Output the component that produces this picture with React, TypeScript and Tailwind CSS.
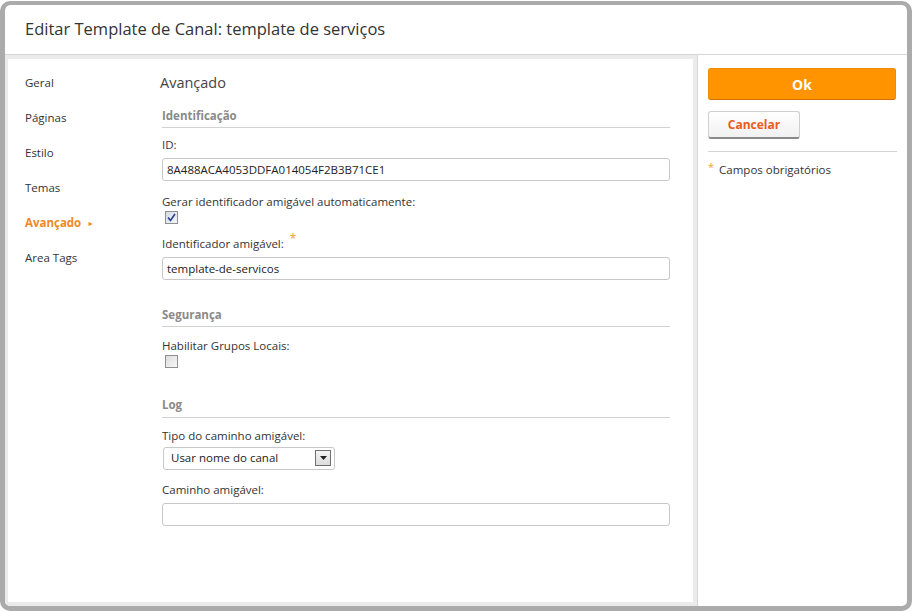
import { ReactNode } from "react";

const navItems = ["Geral", "Páginas", "Estilo", "Temas", "Avançado", "Area Tags"];

function SectionTitle({ children }: { children: ReactNode }) {
  return (
    <div className="border-b border-[#d2d2d2] pb-[3px] text-[11.5px] font-bold text-[#8a8a8a]">
      {children}
    </div>
  );
}

function Field({ label, children, required }: { label: string; children: ReactNode; required?: boolean }) {
  return (
    <div className="flex flex-col">
      <div className="flex h-[18px] items-center text-[11.5px] leading-[18px] text-[#333]">
        {label}
        {required && (
          <span className="relative -top-[5px] ml-[6px] text-[12px] leading-none text-[#f59c1a]">*</span>
        )}
      </div>
      {children}
    </div>
  );
}

function TextBox({ value }: { value?: string }) {
  return (
    <div className="mt-[4px] flex h-[23px] w-[508px] items-center rounded-[3px] border border-[#c8c8c8] bg-white px-[4px] text-[11.5px] text-[#222]">
      {value}
    </div>
  );
}

function CheckBox({ checked }: { checked?: boolean }) {
  return (
    <div
      className={
        "ml-[3px] flex h-[13px] w-[13px] items-center justify-center border border-[#8e8f8f] bg-gradient-to-br " +
        (checked ? "from-[#d4dbe8] to-[#f4f6fa]" : "from-[#dcdcdc] to-[#f8f8f8]")
      }
    >
      {checked && (
        <svg width="9" height="9" viewBox="0 0 9 9">
          <path d="M1 4.5 L3.5 7.5 L8 1" fill="none" stroke="#2a3f8f" strokeWidth="1.6" />
        </svg>
      )}
    </div>
  );
}

export default function App() {
  return (
    <div className="h-[612px] w-[912px] bg-white pt-px" style={{ fontFamily: '"Open Sans", "Noto Sans", sans-serif' }}>
      <div className="flex h-[610px] flex-col overflow-hidden rounded-[10px] border-x-[5px] border-b-[5px] border-t-[4px] border-[#ababab] bg-white">
        <div className="flex h-[50px] shrink-0 items-center border-b border-[#d6d6d6] pl-[20px] text-[16.5px] text-[#333]">
          Editar Template de Canal: template de serviços
        </div>
        <div className="flex flex-1">
          <div className="flex w-[692px] border-[4px] border-[#ebebeb] border-l-[3px]">
            <nav className="flex w-[140px] flex-col pl-[17px] pt-[6px] text-[11.5px] text-[#333]">
              {navItems.map((item) => (
                <div key={item} className="flex h-[35px] items-center">
                  {item === "Avançado" ? (
                    <span className="font-bold text-[#f08a1c]">
                      {item}
                      <span className="ml-[6px] text-[7px] align-middle">►</span>
                    </span>
                  ) : (
                    item
                  )}
                </div>
              ))}
            </nav>
            <div className="flex flex-col pl-[14px] pt-[13px]">
              <div className="-ml-[2px] text-[14.5px] text-[#444]">Avançado</div>
              <div className="mt-[13px]">
                <SectionTitle>Identificação</SectionTitle>
              </div>
              <div className="mt-[8px] flex flex-col">
                <Field label="ID:">
                  <TextBox value="8A488ACA4053DDFA014054F2B3B71CE1" />
                </Field>
                <div className="mt-[12px]">
                  <Field label="Gerar identificador amigável automaticamente:">
                    <CheckBox checked />
                  </Field>
                </div>
                <div className="mt-[11px]">
                  <Field label="Identificador amigável:" required>
                    <TextBox value="template-de-servicos" />
                  </Field>
                </div>
              </div>
              <div className="mt-[26px]">
                <SectionTitle>Segurança</SectionTitle>
              </div>
              <div className="mt-[10px]">
                <Field label="Habilitar Grupos Locais:">
                  <CheckBox />
                </Field>
              </div>
              <div className="mt-[28px]">
                <SectionTitle>Log</SectionTitle>
              </div>
              <div className="mt-[9px] flex flex-col gap-[11px]">
                <Field label="Tipo do caminho amigável:">
                  <div className="mt-[2px] ml-[1px] flex h-[23px] w-[172px] items-center justify-between rounded-[3px] border border-[#c8c8c8] bg-white pl-[7px] pr-[3px] text-[11.5px] text-[#222]">
                    Usar nome do canal
                    <div className="flex h-[16px] w-[16px] items-center justify-center border border-[#6f6f6f] bg-gradient-to-b from-[#f4f4f4] to-[#dcdcdc]">
                      <svg width="7" height="4" viewBox="0 0 7 4">
                        <path d="M0 0 H7 L3.5 4 Z" fill="#222" />
                      </svg>
                    </div>
                  </div>
                </Field>
                <Field label="Caminho amigável:">
                  <TextBox />
                </Field>
              </div>
            </div>
          </div>
          <div className="flex flex-1 flex-col border-l border-[#d6d6d6] px-[10px] pt-[13px]">
            <button className="flex h-[32px] w-[188px] items-center justify-center rounded-[3px] border border-[#f08a00] border-b-[#d26f00] bg-[#ff9400] text-[14px] font-bold text-white">
              Ok
            </button>
            <button className="mt-[11px] flex h-[28px] w-[92px] items-center justify-center rounded-[3px] border border-[#cfcfcf] border-b-[#8a8a8a] border-b-2 bg-gradient-to-b from-white to-[#f1f1f1] text-[12px] font-bold text-[#e85d1c]">
              Cancelar
            </button>
            <div className="mt-[12px] border-t border-[#d4d4d4]" />
            <div className="mt-[9px] flex items-center text-[11.5px] text-[#333]">
              <span className="relative -top-[2px] text-[11px] text-[#f5a623]">*</span>
              <span className="ml-[5px]">Campos obrigatórios</span>
            </div>
          </div>
        </div>
      </div>
    </div>
  );
}
